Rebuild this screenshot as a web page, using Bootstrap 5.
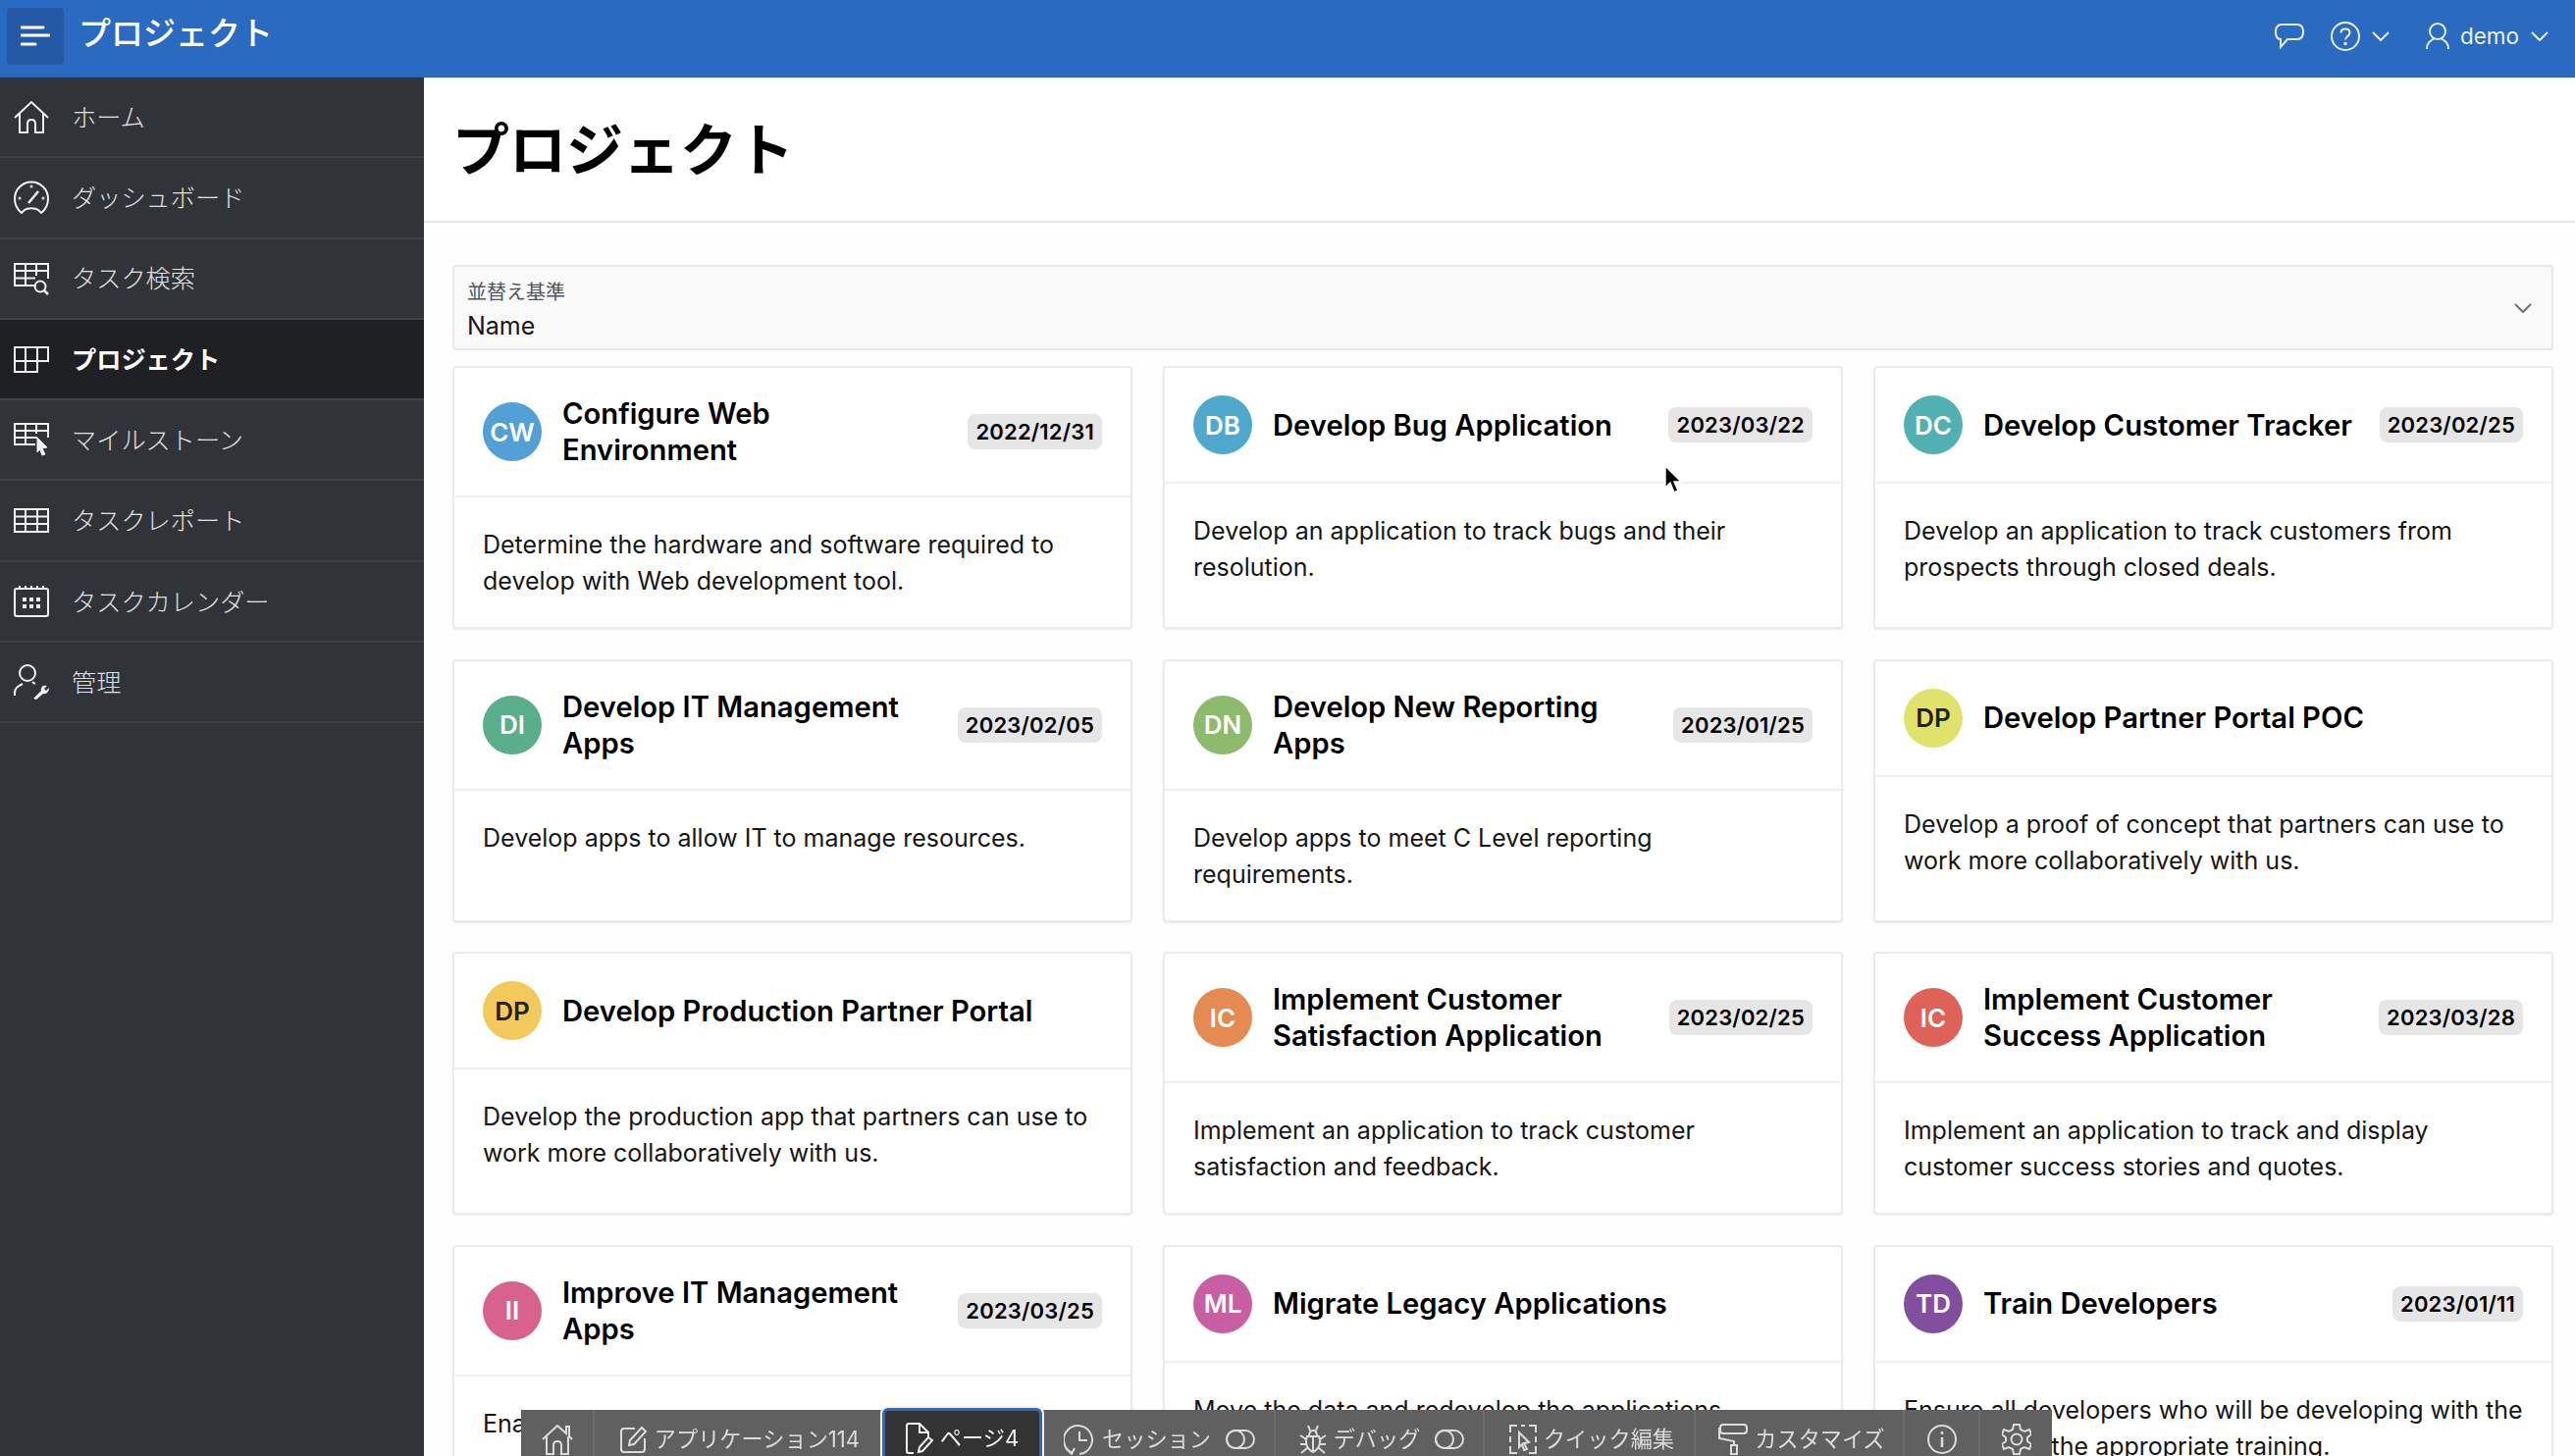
<!DOCTYPE html>
<html lang="ja">
<head>
  <meta charset="UTF-8" />
  <title>プロジェクト</title>
  <link href="https://cdn.jsdelivr.net/npm/bootstrap@5.3.0/dist/css/bootstrap.min.css" rel="stylesheet">
  <style>
    html, body {
      height: 1484px;
      overflow: hidden;
    }
    body {
      font-family: Inter, "Noto Sans CJK JP", sans-serif;
      background-color: #fefefe;
      color: #161616;
    }
    svg {
      fill: none;
      stroke: currentColor;
      stroke-width: 2;
      flex-shrink: 0;
    }
    /* header */
    .top-bar {
      height: 79px;
      background-color: #2b6ac1;
      border-bottom: 1px solid #2760ae;
      color: #fff;
    }
    .menu-toggle {
      width: 58px;
      height: 58px;
      margin: -4px 0 0 7px;
      background-color: #2459a5;
      border-radius: 4px;
    }
    .app-title {
      margin: -8px 0 0 15px;
      font-size: 33px;
      font-weight: 500;
    }
    .top-tools {
      margin: -4px 27px 0 0;
      color: #eaf0f9;
      font-size: 22.5px;
    }
    .top-gap-a { margin-left: 27px; }
    .top-gap-b { margin-left: 12px; }
    .top-gap-c { margin-left: 37px; }
    .top-name { margin-left: 11px; }
    /* side menu */
    .side-menu {
      width: 432px;
      height: 1405px;
      background-color: #303337;
    }
    .side-item {
      height: 82.3px;
      padding-left: 14px;
      gap: 23px;
      background-color: #303337;
      border-bottom: 2px solid #3f4247;
      color: #e0e0e0;
      font-size: 25.2px;
      font-weight: 300;
    }
    .side-item span {
      margin-top: 3px;
    }
    .side-item.is-on {
      background-color: #1f2023;
      color: #fff;
      font-weight: 700;
    }
    .side-item svg {
      color: #f0f0f0;
    }
    /* page */
    .page-head {
      height: 148px;
      padding-left: 29px;
      background-color: #fff;
      border-bottom: 2px solid #e8e8e8;
    }
    .page-head h1 {
      margin: 3px 0 0;
      color: #000;
      font-size: 58px;
      font-weight: 700;
    }
    .page-body {
      padding: 43px 22px 0 29px;
    }
    .sort-box {
      height: 87px;
      margin-bottom: 16px;
      padding: 12px 13px 0;
      background-color: #f9f9f9;
      border: 2px solid #e8e8e8;
      border-radius: 4px;
      position: relative;
    }
    .sort-label {
      color: #555;
      font-size: 20px;
      line-height: 28px;
    }
    .sort-value {
      margin-top: 2px;
      font-size: 25px;
      line-height: 36px;
    }
    .sort-chevron {
      position: absolute;
      top: 37px;
      right: 20px;
      color: #707070;
    }
    .proj-grid {
      --bs-gutter-x: 31px;
      --bs-gutter-y: 30.6px;
    }
    .proj-card {
      --bs-card-border-color: #ebebeb;
      --bs-card-border-width: 2px;
      --bs-card-border-radius: 4px;
      --bs-card-inner-border-radius: 2px;
      --bs-card-cap-bg: transparent;
      --bs-card-cap-padding-x: 29px;
      --bs-card-cap-padding-y: 28px;
      --bs-card-spacer-x: 29px;
      --bs-card-spacer-y: 30px;
      box-shadow: 0 1px 2px rgba(0, 0, 0, 0.08);
    }
    .proj-card .card-header {
      border-bottom: 2px solid #f0f0f0;
      gap: 21px;
    }
    .proj-card .card-body {
      padding-bottom: 28px;
    }
    .proj-avatar {
      width: 60px;
      height: 60px;
      color: #fff;
      font-size: 26px;
      font-weight: 600;
      flex-shrink: 0;
    }
    .tone-cw { background-color: #52a0d6; }
    .tone-db { background-color: #4fa9cd; }
    .tone-dc { background-color: #51b0b1; }
    .tone-di { background-color: #5bae8c; }
    .tone-dn { background-color: #8eba6c; }
    .tone-dp { background-color: #dfe36c; color: #222; }
    .tone-dq { background-color: #f4c95b; color: #222; }
    .tone-ic { background-color: #e58a50; }
    .tone-id { background-color: #df6258; }
    .tone-ii { background-color: #d8628b; }
    .tone-ml { background-color: #c85fa3; }
    .tone-td { background-color: #814f9e; }
    .proj-name {
      margin: 0;
      color: #000;
      font-size: 29.2px;
      font-weight: 600;
      line-height: 37px;
    }
    .proj-date {
      margin-left: auto;
      padding: 0 8px;
      background-color: #e6e6e6;
      border-radius: 8px;
      color: #000;
      font-size: 22px;
      font-weight: 600;
      letter-spacing: 0.2px;
      line-height: 36px;
      white-space: nowrap;
    }
    .proj-text {
      min-height: 74px;
      margin: 0;
      font-size: 25px;
      line-height: 37px;
    }
    /* developer toolbar */
    .dev-bar {
      position: fixed;
      left: 531px;
      top: 1437px;
      width: 1560px;
      height: 60px;
      background-color: #606060;
      color: #dcdcdc;
      font-size: 22.2px;
    }
    .dev-cell {
      height: 60px;
      gap: 7px;
      border-right: 2px solid #6c6c6c;
    }
    .dev-home { width: 75px; }
    .dev-app { width: 293px; padding-left: 5px; }
    .dev-page {
      width: 163px;
      margin-top: -2px;
      height: 62px;
      background-color: #333;
      border: 3px solid #2b6ac1;
      border-radius: 6px;
      box-shadow: 0 0 0 2px #f2f2f2;
      color: #f2f2f2;
    }
    .dev-session { width: 238px; padding-left: 3px; }
    .dev-debug { width: 213px; padding-left: 5px; }
    .dev-quick { width: 215px; padding-left: 5px; }
    .dev-custom { width: 213px; padding-left: 5px; }
    .dev-info { width: 77px; }
    .dev-gear { width: 73px; border-right: 0; }
    .mouse-arrow {
      position: fixed;
      left: 1695px;
      top: 474px;
      color: #fff;
      fill: #000;
      stroke-width: 1.4;
    }
  </style>
</head>
<body>
  <header class="top-bar navbar flex-nowrap align-items-center p-0">
    <div class="d-flex align-items-center">
      <div class="menu-toggle d-flex align-items-center justify-content-center">
        <svg width="30" height="24" viewBox="0 0 30 24"><path d="M1 3H23M1 11H29M1 20H15" stroke-linecap="round" stroke-width="3"/></svg>
      </div>
      <span class="app-title">プロジェクト</span>
    </div>
    <div class="top-tools d-flex align-items-center">
      <svg width="30" height="26" viewBox="0 0 30 26"><path d="M7 1H23C27 1 29 3 29 8.500C29 14 27 16 23 16H13L6 24V16C3 16 1 14 1 8.500C1 3 3 1 7 1Z"/></svg>
      <svg class="top-gap-a" width="30" height="30" viewBox="0 0 30 30"><circle cx="15" cy="15" r="14"/><path d="M10.500 11.500C10.500 9 12.500 7.500 15 7.500C17.500 7.500 19.500 9 19.500 11.500C19.500 15 15 15 15 18.500"/><circle cx="15" cy="22.500" r=".8"/></svg>
      <svg class="top-gap-b" width="18" height="10" viewBox="0 0 18 10"><path d="M1 1L9 9L17 1"/></svg>
      <svg class="top-gap-c" width="24" height="28" viewBox="0 0 24 28"><circle cx="12" cy="9" r="8"/><path d="M1 27C1 21 4 19 8 16.500M23 27C23 21 20 19 16 16.500"/></svg>
      <span class="top-name">demo</span>
      <svg class="top-gap-b" width="18" height="10" viewBox="0 0 18 10"><path d="M1 1L9 9L17 1"/></svg>
    </div>
  </header>

  <div class="d-flex">
    <nav class="side-menu flex-shrink-0">
      <div class="side-item d-flex align-items-center">
        <svg width="36" height="36" viewBox="0 0 36 36"><path d="M1 19L18 3L35 19M6 15V34H14V25C14 22 16 21 18 21C20 21 22 22 22 25V34H30V15"/></svg>
        <span>ホーム</span>
      </div>
      <div class="side-item d-flex align-items-center">
        <svg width="36" height="36" viewBox="0 0 36 36"><path d="M8 34C3 30 1 25 1 19.500A17 17 0 0 1 35 19.500C35 25 33 30 28 34L25 31C22 28.500 14 28.500 11 31Z"/><path d="M15 24L25 12" stroke-width="2.500"/><circle cx="18" cy="7" r=".5"/><circle cx="6" cy="19" r=".5"/><circle cx="30" cy="19" r=".5"/></svg>
        <span>ダッシュボード</span>
      </div>
      <div class="side-item d-flex align-items-center">
        <svg width="36" height="36" viewBox="0 0 36 36"><path d="M23 25H1V3H35V18M1 10H35M1 17.500H22M12 3V25M23 3V15"/><circle cx="27" cy="26" r="5.500"/><path d="M31 30L35 34" stroke-width="2.500"/></svg>
        <span>タスク検索</span>
      </div>
      <div class="side-item is-on d-flex align-items-center">
        <svg width="36" height="36" viewBox="0 0 36 36"><path d="M25 31H1V6H35V20H1M12 6V31M24 6V31"/></svg>
        <span>プロジェクト</span>
      </div>
      <div class="side-item d-flex align-items-center">
        <svg width="36" height="36" viewBox="0 0 36 36"><path d="M22 23H1V2H35V16M1 9H35M1 16H24M12 2V23M23 2V12"/><path d="M24 16L34 26L29 27L32 33L29 34L26.500 28L24 31Z" fill="currentColor" stroke-width="1"/></svg>
        <span>マイルストーン</span>
      </div>
      <div class="side-item d-flex align-items-center">
        <svg width="36" height="36" viewBox="0 0 36 36"><path d="M1 6H35V29H1ZM1 13.500H35M1 21H35M12 6V29M24 6V29"/></svg>
        <span>タスクレポート</span>
      </div>
      <div class="side-item d-flex align-items-center">
        <svg width="36" height="36" viewBox="0 0 36 36"><path d="M3 5H33Q35 5 35 7V31Q35 33 33 33H3Q1 33 1 31V7Q1 5 3 5ZM6 2V6M12 2V6M18 2V6M24 2V6M30 2V6"/><path d="M9 14H13V18H9ZM16 14H20V18H16ZM23 14H27V18H23ZM9 21H13V25H9ZM16 21H20V25H16ZM23 21H27V25H23Z" fill="currentColor" stroke="none"/></svg>
        <span>タスクカレンダー</span>
      </div>
      <div class="side-item d-flex align-items-center">
        <svg width="36" height="36" viewBox="0 0 36 36"><circle cx="14" cy="9" r="8"/><path d="M1 32V29C1 24 5 22 9 20M19 18C20 19 21 19.500 22 20"/><path d="M20 35L28 27C27 23 30 21 34 22L31 25L33 27L36 24C36 28 33 31 30 30L23 36Z" fill="currentColor" stroke="none"/></svg>
        <span>管理</span>
      </div>
    </nav>

    <main class="flex-grow-1">
      <div class="page-head d-flex align-items-center">
        <h1>プロジェクト</h1>
      </div>
      <div class="page-body">
        <div class="sort-box">
          <div class="sort-label">並替え基準</div>
          <div class="sort-value">Name</div>
          <svg class="sort-chevron" width="18" height="10" viewBox="0 0 18 10"><path d="M1 1L9 9L17 1"/></svg>
        </div>
        <div class="row row-cols-3 proj-grid" id="projectList"></div>
      </div>
    </main>
  </div>

  <div class="dev-bar d-flex">
    <div class="dev-cell dev-home d-flex align-items-center justify-content-center">
      <svg width="32" height="32" viewBox="0 0 32 32"><path d="M1 16L16 2L25 10V3H28V13L31 16M5 13V31H12V22C12 19 14 18 16 18C18 18 20 19 20 22V31H27V13"/></svg>
    </div>
    <div class="dev-cell dev-app d-flex align-items-center justify-content-center">
      <svg width="28" height="28" viewBox="0 0 28 28"><path d="M15 3H4Q1 3 1 6V24Q1 27 4 27H22Q25 27 25 24V13"/><path d="M9 20L10 15L22 2L26 6L14 19Z"/></svg>
      <span>アプリケーション114</span>
    </div>
    <div class="dev-cell dev-page d-flex align-items-center justify-content-center">
      <svg width="28" height="32" viewBox="0 0 28 32"><path d="M8 31H3Q1 31 1 29V3Q1 1 3 1H14L23 10V15M14 1V10H23"/><path d="M13 30L14 25L23 15L27 18L17 29Z"/></svg>
      <span>ページ4</span>
    </div>
    <div class="dev-cell dev-session d-flex align-items-center justify-content-center">
      <svg width="32" height="32" viewBox="0 0 32 32"><path d="M9 30A14.500 14.500 0 1 1 16 31M16 8V17H24M2 25L8 31L11 25"/></svg>
      <span>セッション</span>
      <svg class="ms-2" width="30" height="20" viewBox="0 0 30 20"><rect x="1" y="1" width="28" height="18" rx="9"/><circle cx="10" cy="10" r="9"/></svg>
    </div>
    <div class="dev-cell dev-debug d-flex align-items-center justify-content-center">
      <svg width="28" height="30" viewBox="0 0 28 30"><path d="M8 12H20C22 16 22 24 14 28C6 24 6 16 8 12ZM10 12C10 8 11 6 14 6C17 6 18 8 18 12M14 12V28M1 11L7 15M27 11L21 15M1 20H7M27 20H21M2 29L8 24M26 29L20 24M9 1L11 6M19 1L17 6"/></svg>
      <span>デバッグ</span>
      <svg class="ms-2" width="30" height="20" viewBox="0 0 30 20"><rect x="1" y="1" width="28" height="18" rx="9"/><circle cx="10" cy="10" r="9"/></svg>
    </div>
    <div class="dev-cell dev-quick d-flex align-items-center justify-content-center">
      <svg width="28" height="30" viewBox="0 0 28 30"><path d="M1 8V1H8M12 1H16M20 1H27V8M27 12V18M27 22V29H20M8 29H1V22M1 18V12"/><path d="M10 8L20 18L15 19L18 25L15 26L13 20L10 23Z"/></svg>
      <span>クイック編集</span>
    </div>
    <div class="dev-cell dev-custom d-flex align-items-center justify-content-center">
      <svg width="30" height="32" viewBox="0 0 30 32"><path d="M5 1H26Q29 1 29 4V7Q29 10 26 10H5Q2 10 2 7V4Q2 1 5 1ZM2 5H1V15L16 18V22M13 22H19V31H13Z"/></svg>
      <span>カスタマイズ</span>
    </div>
    <div class="dev-cell dev-info d-flex align-items-center justify-content-center">
      <svg width="30" height="30" viewBox="0 0 30 30"><circle cx="15" cy="15" r="14"/><path d="M15 13V23M15 7V10" stroke-width="2.500"/></svg>
    </div>
    <div class="dev-cell dev-gear d-flex align-items-center justify-content-center">
      <svg width="30" height="32" viewBox="0 0 30 32"><circle cx="15" cy="16" r="5.500"/><path d="M12 1H18L19 6L23 8L28 6L30 11L26 14V18L30 21L28 26L23 24L19 26L18 31H12L11 26L7 24L2 26L0 21L4 18V14L0 11L2 6L7 8L11 6Z"/></svg>
    </div>
  </div>

  <svg class="mouse-arrow" width="20" height="30" viewBox="0 0 20 30"><path d="M2 1V23L7 18L11 28L15 26L11 17H18Z"/></svg>

  <script>
    const projects = [
      { ini: 'CW', tone: 'tone-cw', name: 'Configure Web Environment', date: '2022/12/31', text: 'Determine the hardware and software required to develop with Web development tool.' },
      { ini: 'DB', tone: 'tone-db', name: 'Develop Bug Application', date: '2023/03/22', text: 'Develop an application to track bugs and their resolution.' },
      { ini: 'DC', tone: 'tone-dc', name: 'Develop Customer Tracker', date: '2023/02/25', text: 'Develop an application to track customers from prospects through closed deals.' },
      { ini: 'DI', tone: 'tone-di', name: 'Develop IT Management Apps', date: '2023/02/05', text: 'Develop apps to allow IT to manage resources.' },
      { ini: 'DN', tone: 'tone-dn', name: 'Develop New Reporting Apps', date: '2023/01/25', text: 'Develop apps to meet C Level reporting requirements.' },
      { ini: 'DP', tone: 'tone-dp', name: 'Develop Partner Portal POC', date: '', text: 'Develop a proof of concept that partners can use to work more collaboratively with us.' },
      { ini: 'DP', tone: 'tone-dq', name: 'Develop Production Partner Portal', date: '', text: 'Develop the production app that partners can use to work more collaboratively with us.' },
      { ini: 'IC', tone: 'tone-ic', name: 'Implement Customer Satisfaction Application', date: '2023/02/25', text: 'Implement an application to track customer satisfaction and feedback.' },
      { ini: 'IC', tone: 'tone-id', name: 'Implement Customer Success Application', date: '2023/03/28', text: 'Implement an application to track and display customer success stories and quotes.' },
      { ini: 'II', tone: 'tone-ii', name: 'Improve IT Management Apps', date: '2023/03/25', text: 'Enable IT staff to manage resources.' },
      { ini: 'ML', tone: 'tone-ml', name: 'Migrate Legacy Applications', date: '', text: 'Move the data and redevelop the applications.' },
      { ini: 'TD', tone: 'tone-td', name: 'Train Developers', date: '2023/01/11', text: 'Ensure all developers who will be developing with the toolset have the appropriate training.' }
    ];

    const list = document.getElementById('projectList');
    projects.forEach(p => {
      const col = document.createElement('div');
      col.className = 'col';
      col.innerHTML = `
        <div class="card proj-card h-100">
          <div class="card-header d-flex align-items-center">
            <span class="proj-avatar rounded-circle d-flex align-items-center justify-content-center ${p.tone}">${p.ini}</span>
            <h5 class="proj-name">${p.name}</h5>
            ${p.date ? `<span class="proj-date">${p.date}</span>` : ''}
          </div>
          <div class="card-body">
            <p class="proj-text">${p.text}</p>
          </div>
        </div>`;
      list.appendChild(col);
    });
  </script>
  <script src="https://cdn.jsdelivr.net/npm/bootstrap@5.3.0/dist/js/bootstrap.bundle.min.js"></script>
</body>
</html>
